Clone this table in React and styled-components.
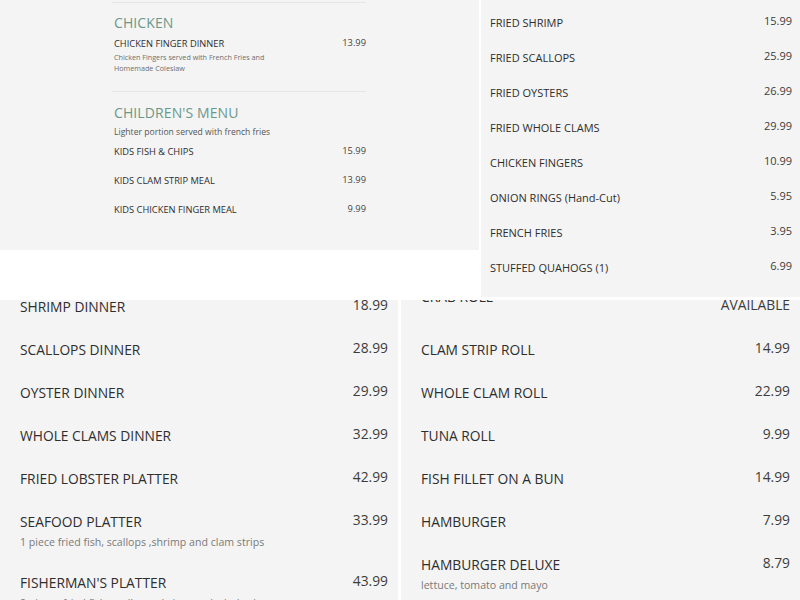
import * as React from 'react';
import styled, { createGlobalStyle } from 'styled-components';

const GlobalStyle = createGlobalStyle`
  html, body {
    margin: 0;
    padding: 0;
    background: #ffffff;
  }
  body {
    font-family: "Open Sans", "Liberation Sans", sans-serif;
    color: #333333;
  }
`;

const Page = styled.div`
  width: 800px;
  height: 600px;
  overflow: hidden;
  background: #ffffff;
  display: flex;
  flex-direction: column;
  gap: 3px;
`;

const TopRow = styled.div`
  display: grid;
  grid-template-columns: 479px 319px;
  column-gap: 2px;
  height: 297px;
`;

const BottomRow = styled.div`
  display: grid;
  grid-template-columns: 398px 399px;
  column-gap: 3px;
  height: 300px;
`;

const Tile = styled.div`
  background: #f4f4f4;
  overflow: hidden;
  height: ${({ $height }) => $height || '100%'};
  padding: ${({ $pad }) => $pad || '0'};
  box-sizing: border-box;
`;

/* top-left: sectioned menu */
const Section = styled.div`
  width: 252px;
  margin-left: 114px;
`;

const Divider = styled.div`
  height: 1px;
  margin: ${({ $margin }) => $margin || '0'};
  margin-left: -2px;
  background: #e6e6e6;
`;

const Heading = styled.h2`
  margin: ${({ $top }) => $top || '0'} 0 0;
  font-size: 14px;
  font-weight: 400;
  line-height: 18px;
  color: #6b988b;
  letter-spacing: 0.1px;
`;

const Subtitle = styled.div`
  font-size: 8.6px;
  line-height: 12px;
  color: #555555;
  margin-top: 4px;
`;

const SmallRow = styled.div`
  display: flex;
  justify-content: space-between;
  align-items: center;
  margin-top: ${({ $top }) => $top || '0'};
`;

const SmallName = styled.span`
  font-size: 9.3px;
  line-height: 14px;
  color: #2e2e2e;
`;

const SmallPrice = styled.span`
  font-size: 9.3px;
  line-height: 14px;
  color: #444444;
  margin-top: -3px;
`;

const SmallDesc = styled.div`
  font-size: 7.2px;
  line-height: 11px;
  color: #6e6e6e;
  max-width: 170px;
  margin-top: 1px;
`;

/* price lists */
const List = styled.div`
  display: flex;
  flex-direction: column;
  gap: ${({ $gap }) => $gap};
  margin-top: ${({ $top }) => $top || '0'};
`;

const Item = styled.div`
  display: flex;
  flex-direction: column;
`;

const ItemLine = styled.div`
  display: flex;
  justify-content: space-between;
  align-items: center;
`;

const Name = styled.span`
  font-size: ${({ $size }) => $size};
  line-height: ${({ $lh }) => $lh};
  color: #2e2e2e;
`;

const Price = styled.span`
  font-size: ${({ $size }) => $size};
  line-height: ${({ $lh }) => $lh};
  color: #3c3c3c;
  text-align: right;
  position: relative;
  top: -2px;
`;

const Desc = styled.div`
  font-size: 10.6px;
  line-height: 16px;
  margin-top: 2px;
  color: #7a7a7a;
`;

const sides = [
  ['FRIED SHRIMP', '15.99'],
  ['FRIED SCALLOPS', '25.99'],
  ['FRIED OYSTERS', '26.99'],
  ['FRIED WHOLE CLAMS', '29.99'],
  ['CHICKEN FINGERS', '10.99'],
  ['ONION RINGS (Hand-Cut)', '5.95'],
  ['FRENCH FRIES', '3.95'],
  ['STUFFED QUAHOGS (1)', '6.99'],
  ['COLESLAW', '1.99'],
];

const dinners = [
  { name: 'SHRIMP DINNER', price: '18.99' },
  { name: 'SCALLOPS DINNER', price: '28.99' },
  { name: 'OYSTER DINNER', price: '29.99' },
  { name: 'WHOLE CLAMS DINNER', price: '32.99' },
  { name: 'FRIED LOBSTER PLATTER', price: '42.99' },
  { name: 'SEAFOOD PLATTER', price: '33.99', desc: '1 piece fried fish, scallops ,shrimp and clam strips' },
  { name: "FISHERMAN'S PLATTER", price: '43.99', desc: '2 pieces fried fish, scallops, shrimp and whole clams' },
];

const rolls = [
  { name: 'CRAB ROLL', price: ['4.99', 'AVAILABLE'] },
  { name: 'CLAM STRIP ROLL', price: '14.99' },
  { name: 'WHOLE CLAM ROLL', price: '22.99' },
  { name: 'TUNA ROLL', price: '9.99' },
  { name: 'FISH FILLET ON A BUN', price: '14.99' },
  { name: 'HAMBURGER', price: '7.99' },
  { name: 'HAMBURGER DELUXE', price: '8.79', desc: 'lettuce, tomato and mayo' },
];

const BigList = ({ items, top }) => (
  <List $gap="23px" $top={top}>
    {items.map((it) => (
      <Item key={it.name}>
        <ItemLine>
          <Name $size="13.8px" $lh="20px">{it.name}</Name>
          <Price $size="13.8px" $lh="20px">
            {Array.isArray(it.price)
              ? it.price.map((p) => <div key={p}>{p}</div>)
              : it.price}
          </Price>
        </ItemLine>
        {it.desc && <Desc>{it.desc}</Desc>}
      </Item>
    ))}
  </List>
);

export default function App() {
  return (
    <>
      <GlobalStyle />
      <Page>
        <TopRow>
          <Tile $height="250px">
            <Section>
              <Divider $margin="2px 0 0" />
              <Heading $top="11px">CHICKEN</Heading>
              <SmallRow $top="5px">
                <SmallName>CHICKEN FINGER DINNER</SmallName>
                <SmallPrice>13.99</SmallPrice>
              </SmallRow>
              <SmallDesc>Chicken Fingers served with French Fries and Homemade Coleslaw</SmallDesc>
              <Divider $margin="17px 0 0" />
              <Heading $top="12px">CHILDREN'S MENU</Heading>
              <Subtitle>Lighter portion served with french fries</Subtitle>
              <SmallRow $top="7px">
                <SmallName>KIDS FISH &amp; CHIPS</SmallName>
                <SmallPrice>15.99</SmallPrice>
              </SmallRow>
              <SmallRow $top="15px">
                <SmallName>KIDS CLAM STRIP MEAL</SmallName>
                <SmallPrice>13.99</SmallPrice>
              </SmallRow>
              <SmallRow $top="15px">
                <SmallName>KIDS CHICKEN FINGER MEAL</SmallName>
                <SmallPrice>9.99</SmallPrice>
              </SmallRow>
            </Section>
          </Tile>
          <Tile $pad="0 8px 0 9px">
            <List $gap="19px" $top="15px">
              {sides.map(([n, p]) => (
                <ItemLine key={n}>
                  <Name $size="11px" $lh="16px">{n}</Name>
                  <Price $size="11px" $lh="16px">{p}</Price>
                </ItemLine>
              ))}
            </List>
          </Tile>
        </TopRow>
        <BottomRow>
          <Tile $pad="0 10px 0 20px">
            <BigList items={dinners} top="-3px" />
          </Tile>
          <Tile $pad="0 10px 0 20px">
            <BigList items={rolls} top="-23px" />
          </Tile>
        </BottomRow>
      </Page>
    </>
  );
}
